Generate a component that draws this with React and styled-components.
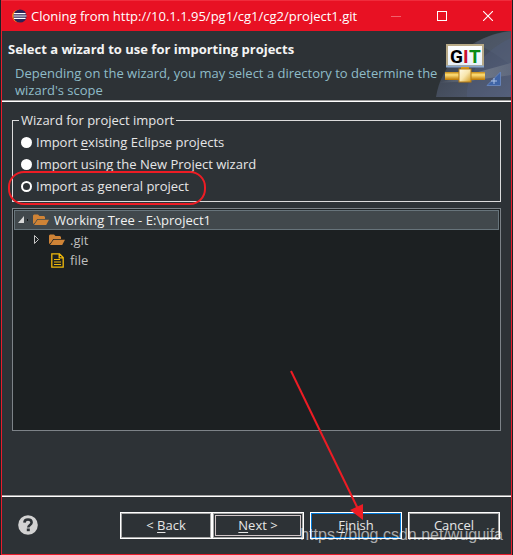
import {useState} from 'react';
import styled, {createGlobalStyle, css} from 'styled-components'


const wizards = [
    {id: 'existing', label: <>Import <u>e</u>xisting Eclipse projects</>},
    {id: 'new', label: <>Import using the New <u>P</u>roject wizard</>},
    {id: 'general', label: <>Import as <u>g</u>eneral project</>, marked: true},
]

const EclipseIcon = () => (
    <svg width="15" height="14" viewBox="0 0 15 14" aria-hidden="true">
        <circle cx="6.5" cy="7" r="6.3" fill="#f7941e" />
        <circle cx="8" cy="7" r="6.6" fill="#2c2255" />
        <path d="M2 4.7h11.6M1.5 7h13M2 9.3h11.6" stroke="#fff" strokeWidth="1.2" />
    </svg>
)

const FolderIcon = () => (
    <svg width="16" height="12" viewBox="0 0 16 12" aria-hidden="true">
        <path d="M0 10V1.5L1 .5h4l1.5 1.5H11l1 1v2H4.2L2 8.5z" fill="#cf8336" />
        <path d="M4.6 5.8H16L13.2 11H1z" fill="#cf8336" />
    </svg>
)

const FileIcon = () => (
    <svg width="13" height="15" viewBox="0 0 13 15" aria-hidden="true">
        <path d="M.8.8h7.7L12.2 4.5v9.7H.8zM8.2.8v4h4" fill="none" stroke="#f0b90b" strokeWidth="1.3" />
        <path d="M3 6.5h6M3 9h7M3 11.5h7" stroke="#f0b90b" strokeWidth="1.2" />
    </svg>
)

const GitBanner = () => (
    <svg width="75" height="66" viewBox="0 0 75 66" aria-hidden="true">
        <defs>
            <linearGradient id="sky" x1="0" y1="0" x2="1" y2="1">
                <stop offset="0" stopColor="#343b43" />
                <stop offset="1" stopColor="#566078" />
            </linearGradient>
            <linearGradient id="ray" x1="0" y1="0" x2="1" y2="0">
                <stop offset="0" stopColor="#8d949c" stopOpacity="0" />
                <stop offset=".5" stopColor="#8d949c" stopOpacity=".6" />
                <stop offset="1" stopColor="#6f7888" stopOpacity=".5" />
            </linearGradient>
            <linearGradient id="sign" x1="0" y1="0" x2="0" y2="1">
                <stop offset="0" stopColor="#fff" />
                <stop offset="1" stopColor="#e5eff8" />
            </linearGradient>
            <linearGradient id="pipe" x1="0" y1="0" x2="0" y2="1">
                <stop offset="0" stopColor="#c68a14" />
                <stop offset=".35" stopColor="#ffe07a" />
                <stop offset="1" stopColor="#b97400" />
            </linearGradient>
            <linearGradient id="knot" x1="0" y1="0" x2="1" y2="1">
                <stop offset="0" stopColor="#fffbe8" />
                <stop offset=".5" stopColor="#f8e6ae" />
                <stop offset="1" stopColor="#d09a20" />
            </linearGradient>
        </defs>
        <path d="M0 66C5 32 34 5 75 0v66z" fill="url(#sky)" />
        <path d="M39 12C51 5 62 1 75 0v34C66 28 53 18 39 12z" fill="#56606f" opacity=".5" />
        <path d="M31 66C29 48 45 20 75 7v59z" fill="#53607f" opacity=".4" />
        <path d="M2 52L75 32v12L32 50z" fill="url(#ray)" />
        <rect x="11" y="14" width="36" height="21" fill="url(#sign)" stroke="#b8aa87" strokeWidth="2" />
        <path d="M10 35.5h38" stroke="#8aa6cc" strokeWidth="2" />
        <SignText x="14" y="32" fill="#000">G</SignText>
        <SignText x="27" y="32" fill="#c8102e">I</SignText>
        <SignText x="33" y="32" fill="#0a8a14">T</SignText>
        <rect x="25" y="36" width="8" height="4" fill="#d99a1c" />
        <rect x="9" y="41" width="40" height="8" fill="url(#pipe)" />
        <rect x="23" y="38" width="12" height="13" fill="url(#knot)" stroke="#b77a10" />
        <path d="M51 54.5L64.5 41v13.5z" fill="#3f64a6" stroke="#6582b8" />
        <path d="M55 50h6M58 47v6" stroke="#c5d6f2" strokeWidth=".8" />
    </svg>
)

const HelpIcon = () => (
    <svg width="20" height="20" viewBox="0 0 20 20" aria-hidden="true">
        <circle cx="10" cy="10" r="9.8" fill="#d2d2d2" />
        <path d="M6.4 7.6C6.5 5.2 8 4.5 10 4.5s3.6 1 3.6 3c0 2.5-3.3 2.4-3.3 5" fill="none" stroke="#2d3236" strokeWidth="2.6" />
        <rect x="8.8" y="13.5" width="3" height="2.7" fill="#2d3236" />
    </svg>
)

const App = () => {
    const [wizard, setWizard] = useState('general')

    return (
        <>
            <GlobalStyle />
            <Desktop>
                <Dialog>
                    <TitleBar>
                        <EclipseIcon />
                        <Caption>Cloning from http://10.1.1.95/pg1/cg1/cg2/project1.git</Caption>
                        <WindowButton aria-label="Minimize" $dim>
                            <svg width="10" height="10"><path d="M0 5.5h10" stroke="currentColor" /></svg>
                        </WindowButton>
                        <WindowButton aria-label="Maximize">
                            <svg width="10" height="10"><rect x=".5" y=".5" width="9" height="9" fill="none" stroke="currentColor" /></svg>
                        </WindowButton>
                        <WindowButton aria-label="Close">
                            <svg width="10" height="10"><path d="M0 0l10 10M10 0L0 10" stroke="currentColor" strokeWidth="1.1" /></svg>
                        </WindowButton>
                    </TitleBar>

                    <Header>
                        <HeaderText>
                            <Heading>Select a wizard to use for importing projects</Heading>
                            <Description>Depending on the wizard, you may select a directory to determine the wizard's scope</Description>
                        </HeaderText>
                        <GitBanner />
                    </Header>

                    <Content>
                        <Group>
                            <legend>Wizard for project import</legend>
                            {wizards.map(({id, label, marked}) => (
                                <Option key={id} htmlFor={id}>
                                    <Radio
                                        type="radio"
                                        name="wizard"
                                        id={id}
                                        checked={wizard === id}
                                        onChange={() => setWizard(id)}
                                    />
                                    <span>{label}</span>
                                    {marked && <Marker />}
                                </Option>
                            ))}
                        </Group>

                        <Tree role="tree">
                            <TreeRow role="treeitem" $selected>
                                <Twisty width="10" height="12" viewBox="0 0 10 12">
                                    <path d="M0 9L6 2v7z" fill="#d8d8d8" />
                                    <rect x="9" y="5" width="1" height="2" fill="#111" />
                                </Twisty>
                                <FolderIcon />
                                <span>Working Tree - E:\project1</span>
                            </TreeRow>
                            <TreeRow role="treeitem" $level={1}>
                                <Twisty width="10" height="12" viewBox="0 0 10 12">
                                    <path d="M.5 1.5v8L4.5 5.5z" fill="none" stroke="#c4c4c4" />
                                </Twisty>
                                <FolderIcon />
                                <span>.git</span>
                            </TreeRow>
                            <TreeRow role="treeitem" $level={1}>
                                <Twisty width="10" height="12" />
                                <IconCell><FileIcon /></IconCell>
                                <span>file</span>
                            </TreeRow>
                        </Tree>
                    </Content>

                    <Footer>
                        <HelpButton aria-label="Help"><HelpIcon /></HelpButton>
                        <Buttons>
                            <Pair>
                                <Button>&lt; <u>B</u>ack</Button>
                                <Button $focused><u>N</u>ext &gt;</Button>
                            </Pair>
                            <Button $primary><u>F</u>inish</Button>
                            <Button>Cancel</Button>
                        </Buttons>
                        <Arrow width="76" height="152" viewBox="0 0 76 152" aria-hidden="true">
                            <path d="M1 1l67 138" stroke="#ed1c24" strokeWidth="2" />
                            <path d="M73 150l-13-10 13-6z" fill="#ed1c24" />
                        </Arrow>
                        <Watermark>https://blog.csdn.net/wuguifa</Watermark>
                    </Footer>
                </Dialog>
            </Desktop>
        </>
    )
}


const GlobalStyle = createGlobalStyle`
    * {
        box-sizing: border-box;
    }
    body {
        margin: 0;
        background-color: #1d2023;
        color: #e6e6e6;
        font-family: "Open Sans", "Noto Sans", sans-serif;
        font-size: 13px;
        line-height: 16px;
    }
    button {
        font: inherit;
        color: inherit;
        background: none;
        border: none;
        padding: 0;
    }
    svg {
        display: block;
        flex: none;
    }
    u {
        text-underline-offset: 2px;
    }
`
const SignText = styled.text`
    font-family: Roboto, sans-serif;
    font-size: 19px;
    font-weight: 700;
`
const Desktop = styled.div`
    display: flex;
    min-height: 100vh;
    padding: 0 1px;
`
const Dialog = styled.main`
    display: flex;
    flex-direction: column;
    flex: 1;
    min-width: 0;
    background-color: #2d3236;
    border: 1px solid #e81c2c;
    border-top-color: #f02c3c;
`
const TitleBar = styled.div`
    display: flex;
    align-items: center;
    height: 30px;
    padding-left: 10px;
    background-color: #e81123;
    color: #fff;
`
const Caption = styled.div`
    flex: 1;
    min-width: 0;
    margin-left: 4px;
    white-space: nowrap;
`
const WindowButton = styled.button`
    display: flex;
    align-items: center;
    justify-content: center;
    width: 46px;
    height: 30px;
    color: ${({$dim}) => $dim ? '#f2606c' : '#fff'};
`
const Header = styled.header`
    display: flex;
    height: 71px;
    border-bottom: 1px solid #fff;
    box-shadow: inset 0 -1px #a0a0a0;
`
/* the text may run a little over the empty corner of the banner */
const HeaderText = styled.div`
    flex: 1;
    z-index: 1;
    margin-right: -10px;
    padding: 10px 0 0 6px;
`
const Heading = styled.h1`
    margin: 0;
    color: #f4f4f4;
    font-size: 13px;
    line-height: 16px;
`
const Description = styled.p`
    margin: 8px 0 0;
    padding-left: 7px;
    line-height: 17px;
    color: #8fbcc8;
`
const Content = styled.div`
    display: flex;
    flex-direction: column;
    flex: 1;
    padding: 10px 10px 64px;
`
const Group = styled.fieldset`
    min-width: 0;
    margin: 0 0 6px;
    padding: 3px 8px 4px;
    border: 1px solid #dcdcdc;

    legend {
        margin-left: -2px;
        padding: 0 2px;
    }
`
const Option = styled.label`
    position: relative;
    display: flex;
    align-items: center;
    height: 22px;
    gap: 4px;
`
const Radio = styled.input`
    appearance: none;
    width: 11px;
    height: 11px;
    margin: 0;
    border-radius: 50%;
    background-color: #fff;

    &:checked {
        background-color: #2d3236;
        border: 2px solid #fff;
    }
`
const Marker = styled.i`
    position: absolute;
    top: -4px;
    left: -13px;
    width: 198px;
    height: 34px;
    border: 2px solid #ed1c24;
    border-radius: 16px;
    pointer-events: none;
`
const Tree = styled.div`
    flex: 1;
    min-height: 120px;
    padding: 1px;
    background-color: #1c2022;
    border: 1px solid #7d8388;
`
const TreeRow = styled.div`
    display: flex;
    align-items: center;
    height: 20px;
    padding-left: ${({$level = 0}) => 4 + $level * 16}px;
    color: #bfbfbf;

    span {
        margin-left: 5px;
    }

    ${({$selected}) => $selected && css`
        background-color: #41484c;
        outline: 1px solid #67747b;
        outline-offset: -1px;
        color: #f0f0f0;
    `}
`
const Twisty = styled.svg`
    margin-right: 5px;
`
const IconCell = styled.div`
    display: flex;
    justify-content: center;
    width: 16px;
`
const Footer = styled.footer`
    position: relative;
    display: flex;
    align-items: center;
    justify-content: space-between;
    height: 59px;
    padding: 0 11px 0 16px;
    border-top: 1px solid #a0a0a0;
    box-shadow: inset 0 1px #fff;
`
const HelpButton = styled.button`
    border-radius: 50%;
`
const Buttons = styled.div`
    display: flex;
    gap: 6px;
`
const Pair = styled.div`
    display: flex;
`
const Button = styled.button`
    width: 92px;
    height: 27px;
    border: 1px solid #fff;
    box-shadow: inset 0 0 0 1px ${({$primary}) => $primary ? '#0078d7' : '#a8a8a8'};

    ${({$focused}) => $focused && css`
        box-shadow: inset 0 0 0 1px #a8a8a8, inset 0 0 0 2px #2d3236, inset 0 0 0 3px #cfc4c6;
    `}
`
const Arrow = styled.svg`
    position: absolute;
    right: 145px;
    bottom: 32px;
    pointer-events: none;
`
const Watermark = styled.div`
    position: absolute;
    right: 8px;
    bottom: 9px;
    font-family: "Liberation Sans", Arial, sans-serif;
    font-size: 16px;
    line-height: 20px;
    color: rgba(255, 255, 255, 0.6);
    pointer-events: none;
`

export default App
